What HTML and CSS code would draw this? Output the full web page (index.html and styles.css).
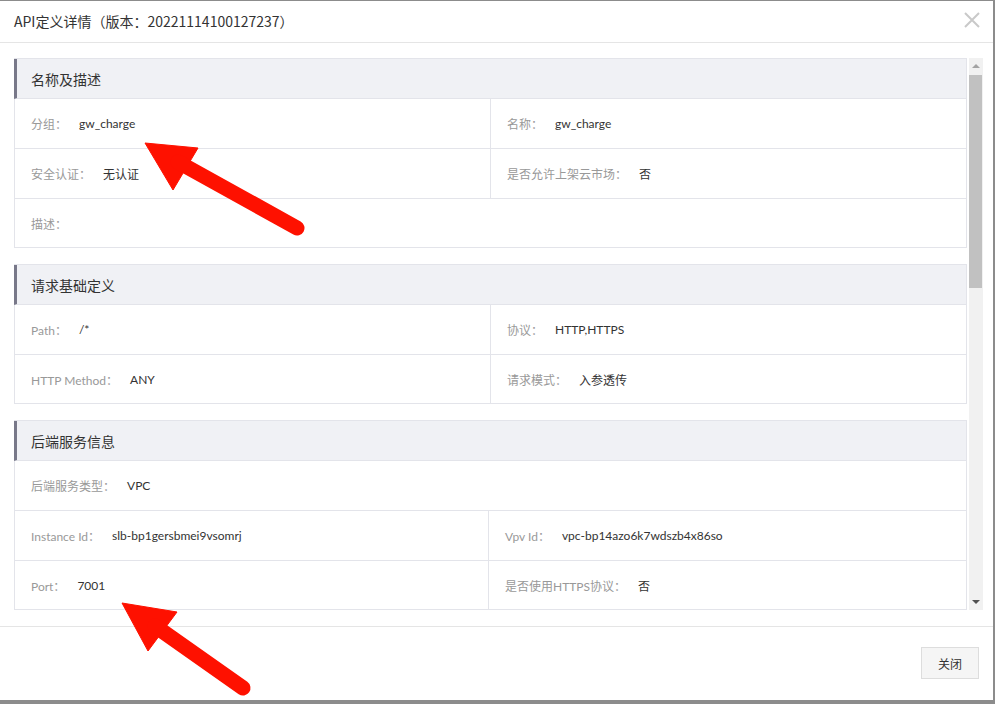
FILE: index.html
```html
<!DOCTYPE html>
<html>
  <head>
    <title>API定义详情</title>
    <link rel="stylesheet" href="styles.css">
  </head>
  <body>
    <div class="dialog">
      <div class="dialog-head">
        <div class="dialog-title">API定义详情（版本：20221114100127237）</div>
        <svg class="close-btn" width="16" height="16" viewBox="0 0 16 16">
          <path d="M1 1L15 15M15 1L1 15" stroke="#c9c9c9" stroke-width="2"/>
        </svg>
      </div>
      <div class="dialog-body">
        <div class="scroll-view">
          <div class="content">
            <div class="section">
              <div class="section-title">名称及描述</div>
              <div class="row">
                <div class="cell"><span class="label">分组：</span><span class="value">gw_charge</span></div>
                <div class="cell right"><span class="label">名称：</span><span class="value">gw_charge</span></div>
              </div>
              <div class="row">
                <div class="cell"><span class="label">安全认证：</span><span class="value">无认证</span></div>
                <div class="cell right"><span class="label">是否允许上架云市场：</span><span class="value">否</span></div>
              </div>
              <div class="row">
                <div class="cell full"><span class="label">描述：</span><span class="value"></span></div>
              </div>
            </div>

            <div class="section">
              <div class="section-title">请求基础定义</div>
              <div class="row">
                <div class="cell"><span class="label">Path：</span><span class="value">/*</span></div>
                <div class="cell right"><span class="label">协议：</span><span class="value">HTTP,HTTPS</span></div>
              </div>
              <div class="row">
                <div class="cell"><span class="label">HTTP Method：</span><span class="value">ANY</span></div>
                <div class="cell right"><span class="label">请求模式：</span><span class="value">入参透传</span></div>
              </div>
            </div>

            <div class="section backend">
              <div class="section-title">后端服务信息</div>
              <div class="row">
                <div class="cell full"><span class="label">后端服务类型：</span><span class="value">VPC</span></div>
              </div>
              <div class="row">
                <div class="cell"><span class="label">Instance Id：</span><span class="value">slb-bp1gersbmei9vsomrj</span></div>
                <div class="cell right"><span class="label">Vpv Id：</span><span class="value">vpc-bp14azo6k7wdszb4x86so</span></div>
              </div>
              <div class="row">
                <div class="cell"><span class="label">Port：</span><span class="value">7001</span></div>
                <div class="cell right"><span class="label">是否使用HTTPS协议：</span><span class="value">否</span></div>
              </div>
            </div>
          </div>
          <div class="scrollbar">
            <div class="arrow-up"></div>
            <div class="thumb"></div>
            <div class="arrow-down"></div>
          </div>
        </div>
      </div>
      <div class="dialog-foot">
        <button class="btn">关闭</button>
      </div>
    </div>

    <svg class="marks" width="995" height="704" viewBox="0 0 995 704">
      <g fill="#fe1100" stroke="#fe1100">
        <polygon points="145,143 198,148 173,190" stroke-width="1"/>
        <line x1="178" y1="162" x2="297" y2="228" stroke-width="15" stroke-linecap="round"/>
        <polygon points="122,603 177,612 148,651" stroke-width="1"/>
        <line x1="155" y1="626" x2="243" y2="688" stroke-width="15" stroke-linecap="round"/>
      </g>
    </svg>
  </body>
</html>
```

FILE: styles.css
```css
html, body {
  margin: 0;
  padding: 0;
}

body {
  width: 995px;
  height: 704px;
  background: #8c8c8c;
  font-family: "Lato", "Noto Sans CJK SC", sans-serif;
  position: relative;
  overflow: hidden;
}

.dialog {
  height: 699px;
  margin-top: 1px;
  margin-right: 2px;
  background: #fff;
  display: flex;
  flex-direction: column;
}

.dialog-head {
  height: 41px;
  border-bottom: 1px solid #e5e5e5;
  display: flex;
  align-items: center;
  justify-content: space-between;
  padding: 0 13px 0 14px;
  flex-shrink: 0;
}

.dialog-title {
  font-family: "Noto Sans CJK SC", sans-serif;
  font-size: 14px;
  color: #333;
  margin-top: -2px;
}

.close-btn {
  margin-top: -3px;
}

.dialog-body {
  padding: 15px 0 16px 14px;
  border-bottom: 1px solid #e5e5e5;
  flex-shrink: 0;
}

.scroll-view {
  height: 552px;
  display: flex;
  overflow: hidden;
}

.content {
  width: 953px;
  flex-shrink: 0;
}

.section {
  border: 1px solid #e3e4ea;
  margin-bottom: 16px;
}

.section-title {
  height: 39px;
  margin-left: -1px;
  background: #f0f1f5;
  border-left: 3px solid #787889;
  border-bottom: 1px solid #e3e4ea;
  padding-left: 14px;
  font-size: 14px;
  color: #333;
  display: flex;
  align-items: center;
}

.row {
  display: flex;
  height: 49px;
  border-bottom: 1px solid #e3e4ea;
}

.row:last-child {
  height: 48px;
  border-bottom: none;
}

.cell {
  width: 475px;
  padding-left: 16px;
  display: flex;
  align-items: center;
  font-size: 12px;
  box-sizing: border-box;
}

.cell.right {
  flex: 1;
  border-left: 1px solid #e3e4ea;
}

.backend .cell.right {
  margin-left: -2px;
}

.cell.full {
  width: 100%;
}

.label {
  color: #999;
  margin-right: 12px;
}

.value {
  color: #333;
}

.scrollbar {
  width: 14px;
  margin-left: 2px;
  background: #f1f1f1;
  position: relative;
}

.thumb {
  position: absolute;
  left: 0;
  top: 17px;
  width: 13px;
  height: 213px;
  background: #c1c1c1;
}

.arrow-up {
  position: absolute;
  left: 3px;
  top: 6px;
  border-left: 4px solid transparent;
  border-right: 4px solid transparent;
  border-bottom: 4px solid #a3a3a3;
}

.arrow-down {
  position: absolute;
  left: 3px;
  bottom: 6px;
  border-left: 4px solid transparent;
  border-right: 4px solid transparent;
  border-top: 4px solid #505050;
}

.dialog-foot {
  flex: 1;
  display: flex;
  justify-content: flex-end;
  align-items: flex-start;
  padding: 20px 14px 0 0;
}

.btn {
  width: 58px;
  height: 32px;
  background: #f5f5f5;
  border: 1px solid #ddd;
  font-family: "Noto Sans CJK SC", sans-serif;
  font-size: 12px;
  color: #333;
  padding: 0;
}

.marks {
  position: absolute;
  left: 0;
  top: 0;
  pointer-events: none;
}
```
